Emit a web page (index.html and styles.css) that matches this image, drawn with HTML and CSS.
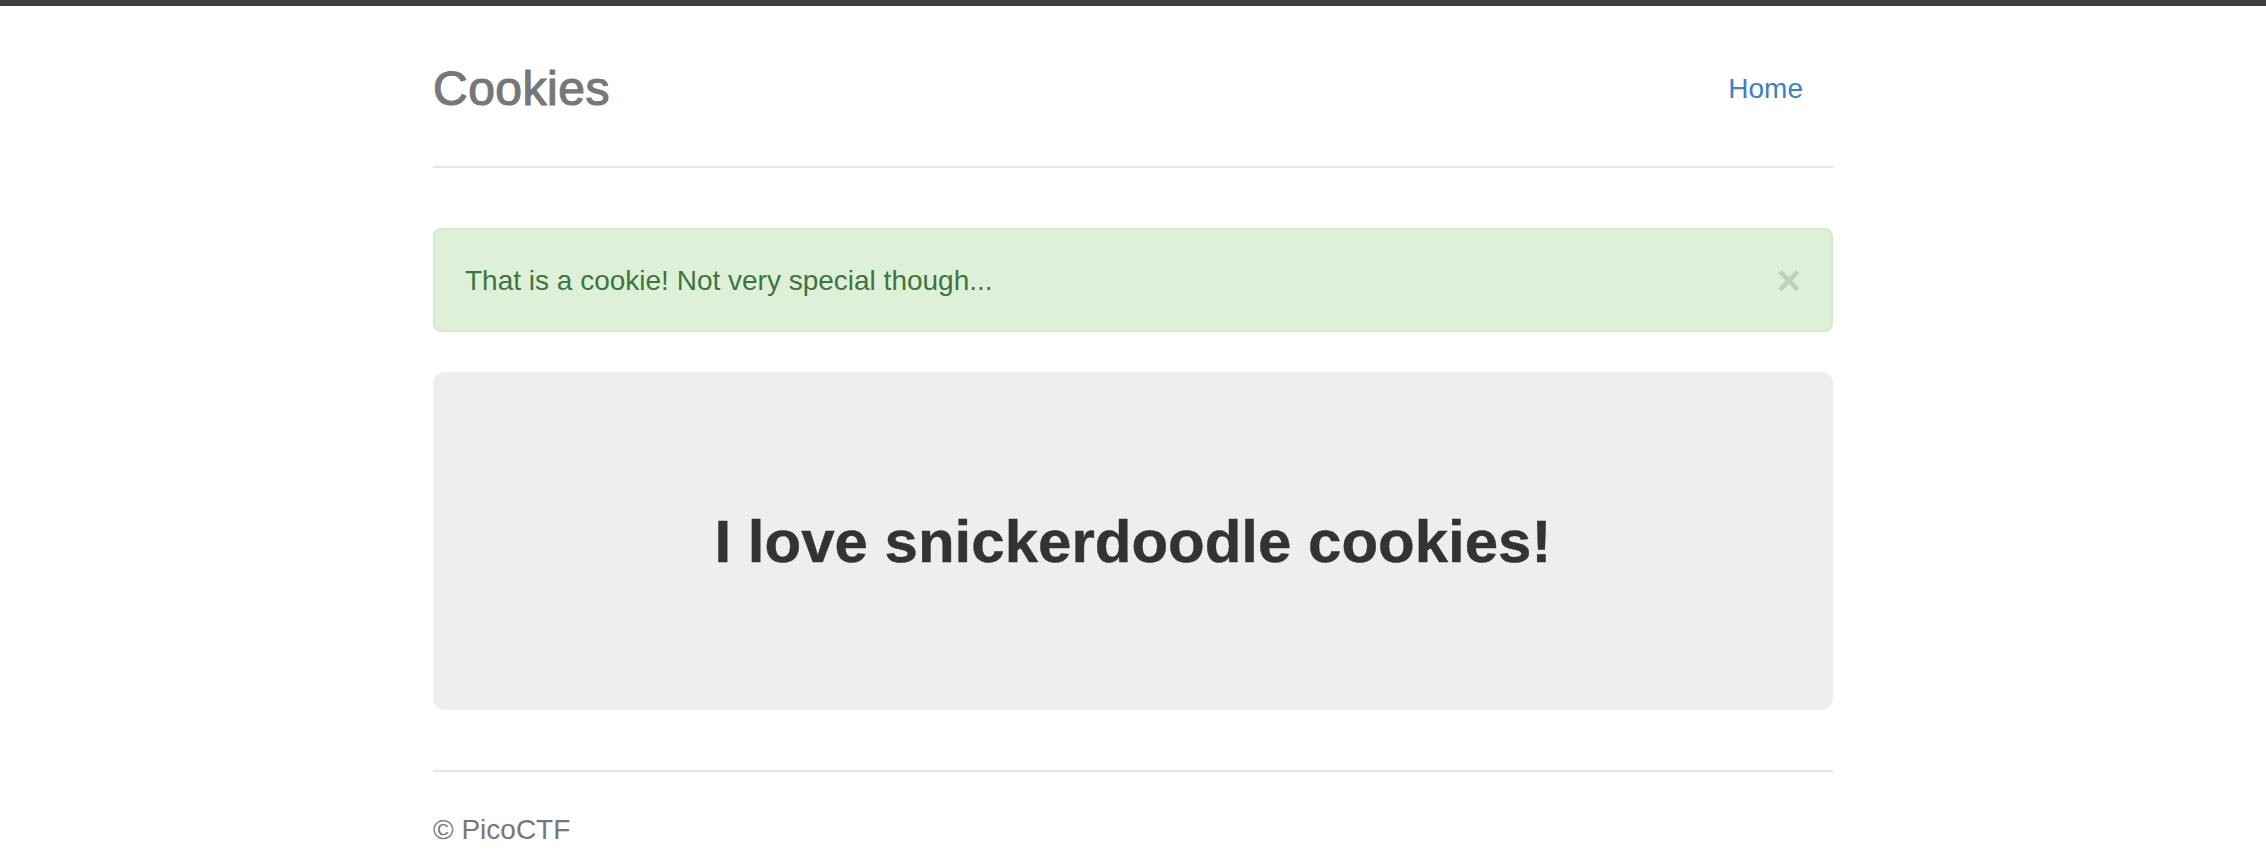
FILE: index.html
```html
<!DOCTYPE html>
<html lang="en">
<head>
<meta charset="utf-8">
<title>Cookies</title>
<link rel="stylesheet" href="styles.css">
</head>
<body>
<div class="topbar"></div>
<div class="container">
  <header class="header">
    <h3 class="brand">Cookies</h3>
    <nav>
      <ul class="nav-pills">
        <li><a href="#" class="nav-link">Home</a></li>
      </ul>
    </nav>
  </header>

  <div class="alert">
    <span class="alert-text">That is a cookie! Not very special though...</span>
    <span class="close">&times;</span>
  </div>

  <div class="jumbotron">
    <h1>I love snickerdoodle cookies!</h1>
  </div>

  <footer class="footer">
    <p>&copy; PicoCTF</p>
  </footer>
</div>
</body>
</html>
```
FILE: styles.css
```css
html, body {
  margin: 0;
  padding: 0;
  background: #fff;
}
body {
  font-family: "Liberation Sans", Helvetica, Arial, sans-serif;
  font-size: 28px;
  line-height: 40px;
  color: #333;
}
.topbar {
  height: 6px;
  background: #3d3d3d;
}
.container {
  max-width: 1400px;
  margin: 0 auto;
  padding-top: 40px;
}
.header {
  display: flex;
  justify-content: space-between;
  align-items: center;
  padding-top: 3px;
  padding-bottom: 37px;
  border-bottom: 2px solid #e5e5e5;
  margin-bottom: 60px;
}
.brand {
  margin: 0;
  font-size: 48px;
  line-height: 80px;
  font-weight: 500;
  color: #777;
  letter-spacing: 0.5px;
  -webkit-text-stroke: 1.2px #777;
}
.nav-pills {
  list-style: none;
  margin: 0;
  padding: 0;
  display: flex;
}
.nav-link {
  display: block;
  padding: 20px 30px;
  color: #3f80c4;
  text-decoration: none;
  border-radius: 8px;
}
.alert {
  display: flex;
  justify-content: space-between;
  align-items: center;
  padding: 31px 30px 29px 30px;
  border: 2px solid #d6e9c6;
  border-radius: 8px;
  background: #dff0d8;
  color: #3c763d;
  margin-bottom: 40px;
}
.close {
  font-size: 42px;
  font-weight: bold;
  line-height: 40px;
  color: #000;
  opacity: 0.13;
  text-shadow: 0 2px 0 #fff;
  cursor: pointer;
}
.jumbotron {
  background: #eee;
  border-radius: 12px;
  padding: 137px 0 135px;
  text-align: center;
  margin-bottom: 60px;
}
.jumbotron h1 {
  margin: 0;
  font-size: 60px;
  line-height: 66px;
  font-weight: bold;
  color: #333;
  -webkit-text-stroke: 0.4px #333;
}
.footer {
  padding-top: 38px;
  border-top: 2px solid #e5e5e5;
  color: #777;
}
.footer p {
  margin: 0 0 20px;
}
```
